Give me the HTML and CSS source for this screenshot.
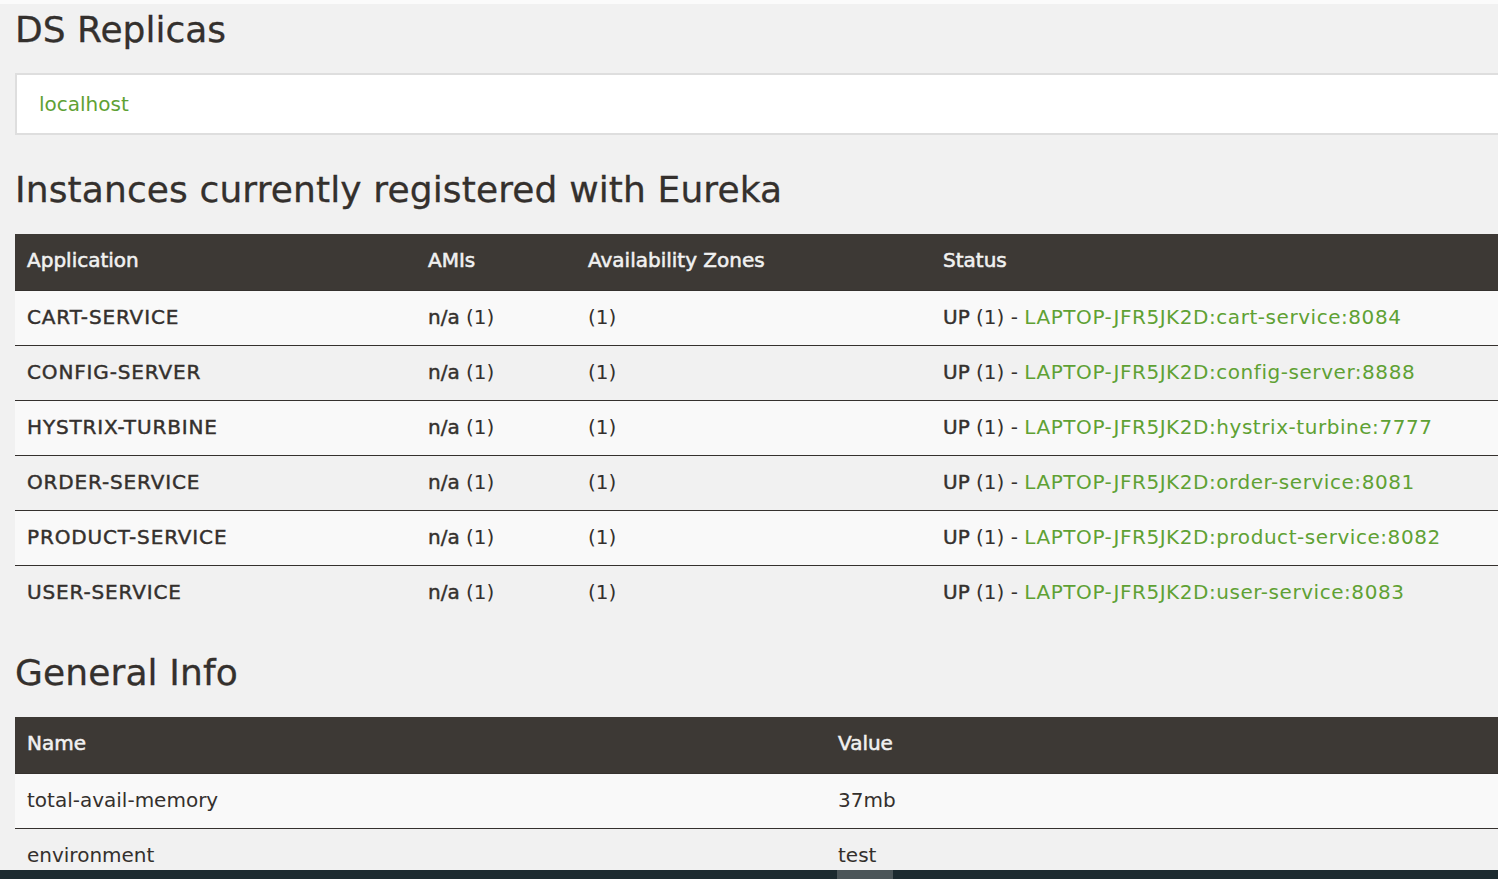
FILE: index.html
```html
<!DOCTYPE html>
<html lang="en">
<head>
<meta charset="utf-8">
<title>Eureka</title>
<link rel="stylesheet" href="styles.css">
</head>
<body>
<div class="top-strip"></div>
<div class="container">
  <h1 class="page-title">DS Replicas</h1>
  <ul class="well">
    <li><a href="#">localhost</a></li>
  </ul>

  <h2 class="section-title">Instances currently registered with Eureka</h2>
  <table class="table instances">
    <colgroup>
      <col class="c-app"><col class="c-ami"><col class="c-az"><col>
    </colgroup>
    <thead>
      <tr><th>Application</th><th>AMIs</th><th>Availability Zones</th><th>Status</th></tr>
    </thead>
    <tbody>
      <tr><td><b class="app">CART-SERVICE</b></td><td><b>n/a</b> (1)</td><td>(1)</td><td><b>UP</b> (1) - <a class="inst" href="#">LAPTOP-JFR5JK2D:cart-service:8084</a></td></tr>
      <tr><td><b class="app">CONFIG-SERVER</b></td><td><b>n/a</b> (1)</td><td>(1)</td><td><b>UP</b> (1) - <a class="inst" href="#">LAPTOP-JFR5JK2D:config-server:8888</a></td></tr>
      <tr><td><b class="app">HYSTRIX-TURBINE</b></td><td><b>n/a</b> (1)</td><td>(1)</td><td><b>UP</b> (1) - <a class="inst" href="#">LAPTOP-JFR5JK2D:hystrix-turbine:7777</a></td></tr>
      <tr><td><b class="app">ORDER-SERVICE</b></td><td><b>n/a</b> (1)</td><td>(1)</td><td><b>UP</b> (1) - <a class="inst" href="#">LAPTOP-JFR5JK2D:order-service:8081</a></td></tr>
      <tr><td><b class="app">PRODUCT-SERVICE</b></td><td><b>n/a</b> (1)</td><td>(1)</td><td><b>UP</b> (1) - <a class="inst" href="#">LAPTOP-JFR5JK2D:product-service:8082</a></td></tr>
      <tr><td><b class="app">USER-SERVICE</b></td><td><b>n/a</b> (1)</td><td>(1)</td><td><b>UP</b> (1) - <a class="inst" href="#">LAPTOP-JFR5JK2D:user-service:8083</a></td></tr>
    </tbody>
  </table>

  <h2 class="section-title">General Info</h2>
  <table class="table info">
    <colgroup>
      <col class="c-name"><col>
    </colgroup>
    <thead>
      <tr><th>Name</th><th>Value</th></tr>
    </thead>
    <tbody>
      <tr><td>total-avail-memory</td><td>37mb</td></tr>
      <tr><td>environment</td><td>test</td></tr>
      <tr><td>num-of-cpus</td><td>8</td></tr>
    </tbody>
  </table>
</div>
<div class="hscroll"><div class="hscroll-thumb"></div></div>
</body>
</html>
```

FILE: styles.css
```css
html, body {
  margin: 0;
  padding: 0;
  overflow: hidden;
}
body {
  background: #f1f1f1;
  color: #34302d;
  font-family: "DejaVu Sans", "Liberation Sans", sans-serif;
  font-size: 20px;
  line-height: 24px;
}
.top-strip {
  height: 4px;
  background: #fbfbfb;
}
.container {
  width: 1700px;
  padding-left: 15px;
}
.page-title,
.section-title {
  font-family: "DejaVu Sans", sans-serif;
  font-weight: normal;
  font-size: 36px;
  line-height: 44px;
  color: #34302d;
  -webkit-text-stroke: 0.3px currentColor;
}
.page-title {
  margin: 3.5px 0 21.5px;
}
.section-title {
  margin: 0 0 22.5px;
  letter-spacing: 0.12px;
}
.well {
  list-style: none;
  margin: 0 0 32.5px;
  padding: 17px 22px;
  background: #fff;
  border: 2px solid #dedede;
}
a {
  color: #5fa134;
  text-decoration: none;
}
a.inst {
  letter-spacing: 0.55px;
}
b {
  font-weight: normal;
  -webkit-text-stroke: 0.45px currentColor;
}
b.app {
  letter-spacing: 0.85px;
}
.table {
  width: 1700px;
  table-layout: fixed;
  border-collapse: collapse;
  border-spacing: 0;
}
.instances {
  margin-bottom: 30.5px;
}
.c-app { width: 401px; }
.c-ami { width: 160px; }
.c-az { width: 355px; }
.c-name { width: 811px; }
.table th {
  background: #3d3935;
  color: #f1f1f1;
  text-align: left;
  font-weight: normal;
  -webkit-text-stroke: 0.55px currentColor;
  padding: 14px 12px 18px;
  height: 24px;
  white-space: nowrap;
}
.table td {
  border-top: 1px solid #35312e;
  padding: 14px 12px 16px;
  height: 24px;
  white-space: nowrap;
  text-align: left;
}
.table tbody tr:nth-child(odd) {
  background: #f9f9f9;
}
.hscroll {
  position: fixed;
  left: 0;
  right: 0;
  bottom: 0;
  height: 9px;
  background: #1c2a2f;
}
.hscroll-thumb {
  position: absolute;
  left: 837px;
  top: 0;
  width: 56px;
  height: 9px;
  background: #4b5558;
}
```
